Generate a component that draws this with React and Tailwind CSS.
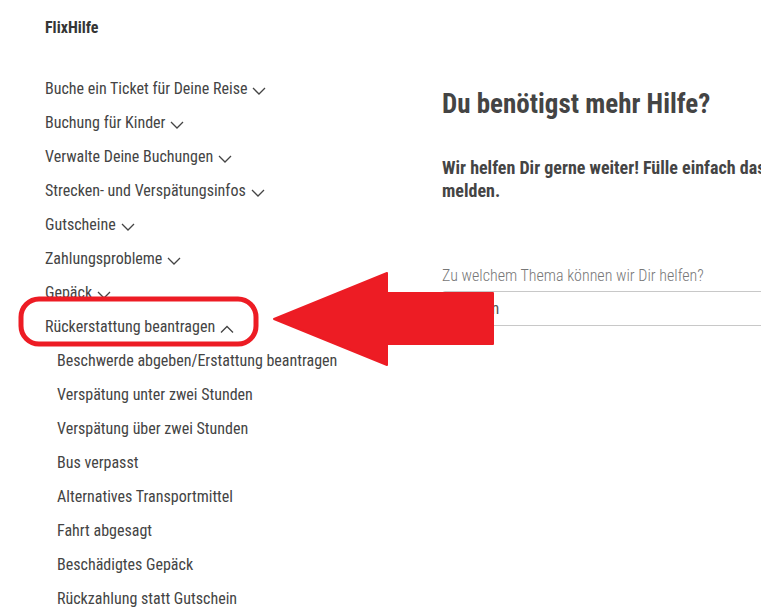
const MENU = [
  'Buche ein Ticket für Deine Reise',
  'Buchung für Kinder',
  'Verwalte Deine Buchungen',
  'Strecken- und Verspätungsinfos',
  'Gutscheine',
  'Zahlungsprobleme',
  'Gepäck',
];

const SUB = [
  'Beschwerde abgeben/Erstattung beantragen',
  'Verspätung unter zwei Stunden',
  'Verspätung über zwei Stunden',
  'Bus verpasst',
  'Alternatives Transportmittel',
  'Fahrt abgesagt',
  'Beschädigtes Gepäck',
  'Rückzahlung statt Gutschein',
];

function Chevron({ up }) {
  return (
    <svg width="14" height="8" viewBox="0 0 14 8" className="ml-[5px] mt-[3px]" fill="none" stroke="#444" strokeWidth="1.3">
      {up ? <path d="M1 7.5 L7 1.5 L13 7.5" /> : <path d="M1 1 L7 7 L13 1" />}
    </svg>
  );
}

export default function App() {
  return (
    <div
      className="relative w-[761px] h-[612px] overflow-hidden bg-white text-[#444]"
      style={{ fontFamily: 'Roboto, "Liberation Sans", sans-serif', fontStretch: '75%' }}
    >
      <div className="flex">
        {/* Sidebar */}
        <div className="w-[442px] shrink-0 pl-[45px] pt-[18px]">
          <div className="text-[16px] font-bold leading-[20px] text-[#353535]">FlixHilfe</div>
          <ul className="mt-[34px]">
            {MENU.map((m) => (
              <li key={m} className="flex items-center h-[34px] text-[16px]">
                {m}
                <Chevron />
              </li>
            ))}
            <li className="flex items-center h-[34px] text-[16px]">
              Rückerstattung beantragen
              <Chevron up />
            </li>
            {SUB.map((s) => (
              <li key={s} className="flex items-center h-[34px] pl-[12px] text-[16px]">
                {s}
              </li>
            ))}
          </ul>
        </div>

        {/* Main */}
        <div className="w-[720px] shrink-0 pt-[86px]">
          <h1 className="text-[27px] font-bold leading-[36px] text-[#444]">Du benötigst mehr Hilfe?</h1>
          <p className="mt-[34px] text-[18px] font-bold leading-[23px] text-[#444]">
            Wir helfen Dir gerne weiter! Fülle einfach das Kontaktformular aus und wir melden uns bei Dir
            <br />
            melden.
          </p>
          <label className="block mt-[64px] text-[16px] font-light leading-[20px] text-[#777]">
            Zu welchem Thema können wir Dir helfen?
          </label>
          <div className="mt-[5px] h-[35px] border border-[#c8c8c8] rounded-[3px] flex items-center px-[10px] text-[16px] text-[#555]">
            Wählen
          </div>
        </div>
      </div>

      {/* Red annotation */}
      <svg className="absolute left-0 top-0 pointer-events-none" width="761" height="612">
        <rect x="21" y="299" width="235" height="45" rx="18" ry="18" fill="none" stroke="#ed1c24" strokeWidth="5" />
        <polygon points="274,319 387,273 387,293 493,293 493,344 387,344 387,365" fill="#ed1c24" strokeLinejoin="round" stroke="#ed1c24" strokeWidth="2" />
      </svg>
    </div>
  );
}
